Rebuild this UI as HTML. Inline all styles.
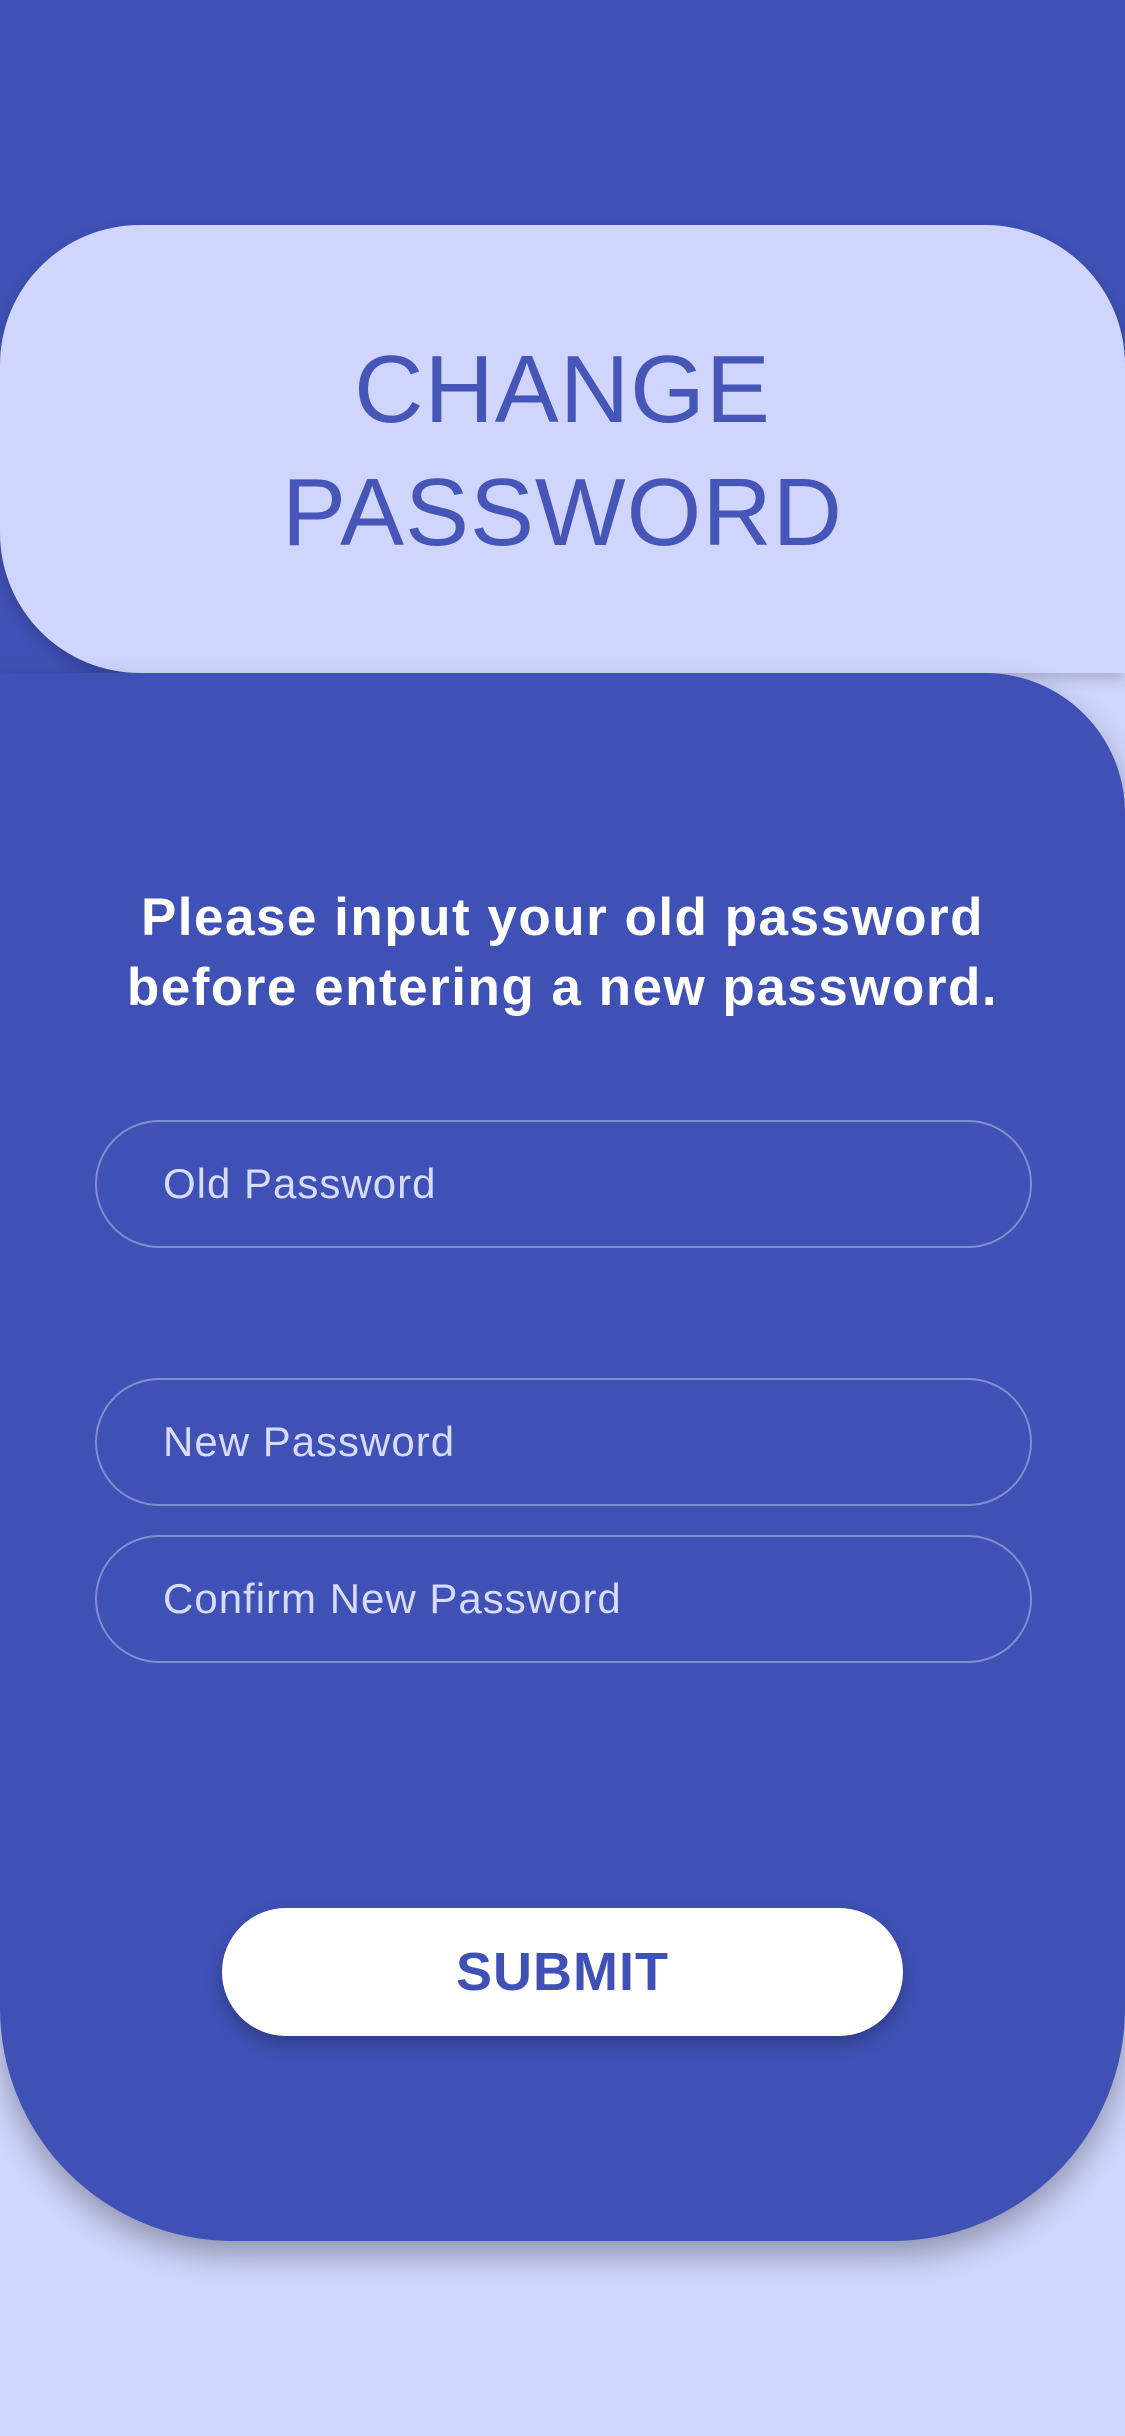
<!DOCTYPE html>
<html><head><meta charset="utf-8"><style>
html,body{margin:0;padding:0}
body{width:1125px;height:2436px;background:#cfd5fc;position:relative;overflow:hidden;font-family:"Liberation Sans",sans-serif}
.abs{position:absolute}
.bluestrip{left:0;top:0;width:1125px;height:900px;background:#3f51b5}
.lightcorner{left:800px;top:600px;width:325px;height:300px;background:#cfd5fc}
.lightcard{left:0;top:225px;width:1125px;height:448px;background:#cfd5fc;border-radius:140px 140px 0 140px;box-shadow:0 6px 14px rgba(0,0,0,0.18)}
.main{left:0;top:673px;width:1125px;height:1568px;background:#3f51b5;border-radius:0 140px 233px 233px;box-shadow:0 14px 30px rgba(0,0,0,0.3)}
.title{left:0;width:1125px;text-align:center;color:#4655b8;font-size:96px;font-weight:normal;letter-spacing:1px;line-height:1}
.sub{left:0;width:1125px;top:883px;text-align:center;color:#fff;font-weight:bold;font-size:53px;letter-spacing:1.5px;line-height:70px}
.inp{left:95px;width:933px;height:124px;border:2px solid rgba(255,255,255,0.35);border-radius:64px;color:#d6dbff;font-size:42px;letter-spacing:1px;line-height:124px;box-sizing:content-box}
.inp span{margin-left:66px}
.btn{left:222px;top:1908px;width:681px;height:128px;background:#fff;border-radius:64px;text-align:center;line-height:128px;color:#3f51b5;font-weight:bold;font-size:54px;letter-spacing:1px;box-shadow:0 8px 16px rgba(0,0,0,0.25)}
</style></head><body>
<div class="abs bluestrip"></div>
<div class="abs lightcorner"></div>
<div class="abs lightcard"></div>
<div class="abs main"></div>
<div class="abs title" style="top:342px">CHANGE</div>
<div class="abs title" style="top:465px">PASSWORD</div>
<div class="abs sub">Please input your old password<br>before entering a new password.</div>
<div class="abs inp" style="top:1120px"><span>Old Password</span></div>
<div class="abs inp" style="top:1378px"><span>New Password</span></div>
<div class="abs inp" style="top:1535px"><span>Confirm New Password</span></div>
<div class="abs btn">SUBMIT</div>
</body></html>
